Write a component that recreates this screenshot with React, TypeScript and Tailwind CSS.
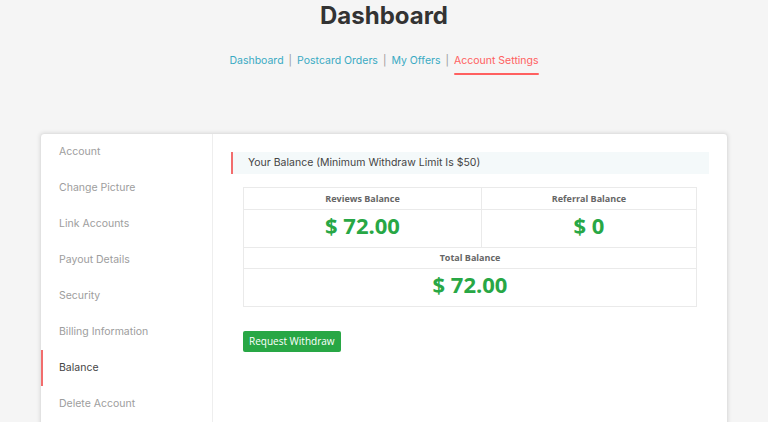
const menu = [
  'Account',
  'Change Picture',
  'Link Accounts',
  'Payout Details',
  'Security',
  'Billing Information',
  'Balance',
  'Delete Account',
]

const navLinks = ['Dashboard', 'Postcard Orders', 'My Offers']

export default function App() {
  return (
    <div className="min-h-screen bg-[#f5f5f5] font-['Inter','Noto_Sans',sans-serif]">
      <h1 className="pt-[2px] text-center text-[24px] font-bold leading-[28px] text-[#333]">Dashboard</h1>

      <nav className="mt-[22px] flex justify-center text-[10.5px] leading-[18px] text-[#3aaac3]">
        {navLinks.map((l) => (
          <span key={l} className="flex">
            <span>{l}</span>
            <span className="mx-[5px] text-[#999]">|</span>
          </span>
        ))}
        <span className="relative text-[#ff6060]">
          Account Settings
          <span className="absolute -bottom-[5px] left-0 right-0 h-[2px] rounded-full bg-[#ff6060]" />
        </span>
      </nav>

      <div className="mx-auto mt-[63px] flex h-[320px] w-[688px] rounded-[4px] border border-[#e2e2e2] bg-white shadow-[0_0_4px_rgba(0,0,0,0.12)]">
        <aside className="w-[172px] shrink-0 border-r border-[#eee]">
          {menu.map((m) => (
            <div
              key={m}
              className={
                m === 'Balance'
                  ? 'flex h-[36px] items-center border-l-2 border-[#f26d6d] pl-[16px] text-[10.5px] text-[#444]'
                  : 'flex h-[36px] items-center pl-[18px] text-[10.5px] text-[#9d9d9d]'
              }
            >
              {m}
            </div>
          ))}
        </aside>

        <main className="flex-1 px-[18px] pt-[18px]">
          <div className="flex h-[22px] items-center border-l-2 border-[#f26d6d] bg-[#f4f9fa] pl-[15px] text-[10.5px] text-[#444]">
            Your Balance (Minimum Withdraw Limit Is $50)
          </div>

          <div className="mx-[12px] mt-[13px] border border-[#eaeaea] font-['Open_Sans',sans-serif]">
            <div className="grid grid-cols-[238px_1fr]">
              <div className="border-r border-[#eaeaea]">
                <div className="flex h-[22px] items-center justify-center border-b border-[#eaeaea] text-[9px] font-bold text-[#666]">
                  Reviews Balance
                </div>
                <div className="flex h-[37px] items-center justify-center pb-[6px] text-[22px] font-bold text-[#28a745]">
                  $ 72.00
                </div>
              </div>
              <div>
                <div className="flex h-[22px] items-center justify-center border-b border-[#eaeaea] text-[9px] font-bold text-[#666]">
                  Referral Balance
                </div>
                <div className="flex h-[37px] items-center justify-center pb-[6px] text-[22px] font-bold text-[#28a745]">
                  $ 0
                </div>
              </div>
            </div>
            <div className="flex h-[22px] items-center justify-center border-y border-[#eaeaea] text-[9px] font-bold text-[#666]">
              Total Balance
            </div>
            <div className="flex h-[37px] items-center justify-center pb-[6px] text-[22px] font-bold text-[#28a745]">
              $ 72.00
            </div>
          </div>

          <button className="ml-[12px] mt-[24px] h-[21px] rounded-[2px] bg-[#28a745] px-[6px] font-['Open_Sans',sans-serif] text-[10px] text-white">
            Request Withdraw
          </button>
        </main>
      </div>
    </div>
  )
}
